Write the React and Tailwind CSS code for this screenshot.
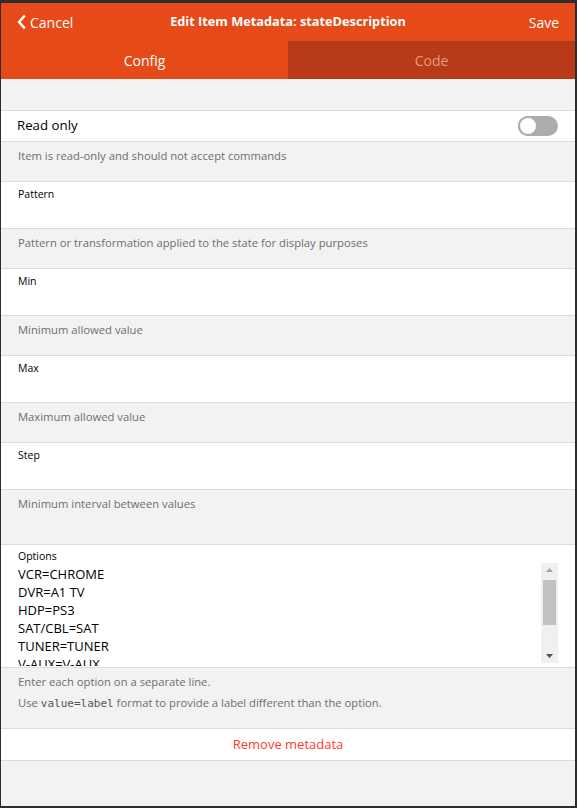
import React from "react";

const font = { fontFamily: '"Open Sans", "Noto Sans", sans-serif' };

function FieldRow({ label, desc, descH = "h-[40px]" }) {
  return (
    <>
      <div className="h-[47px] bg-white border-b border-[#dcdcdc] px-[17px] pt-[5px]">
        <div className="text-[10.5px] text-black leading-[14px]">{label}</div>
      </div>
      <div className={`${descH} border-b border-[#dcdcdc] px-[17px] pt-[6px]`}>
        <div className="text-[11.25px] text-[#6e6e6e] leading-[16px]">{desc}</div>
      </div>
    </>
  );
}

export default function App() {
  return (
    <div className="w-[577px] h-[808px] bg-[#2d2d2d] pt-[3px] pl-[1px] pr-[2px] pb-[2px]" style={font}>
      <div className="h-full bg-[#f2f2f2] flex flex-col overflow-hidden">
        <div className="h-[38px] bg-[#e64a19] flex items-center px-[16px] text-white">
          <div className="flex-1 flex items-center gap-[4px] text-[14px]">
            <svg width="9" height="14" viewBox="0 0 9 14">
              <path d="M7 1.5 L2 7 L7 12.5" fill="none" stroke="white" strokeWidth="2.6" strokeLinecap="round" strokeLinejoin="round" />
            </svg>
            <span>Cancel</span>
          </div>
          <div className="text-[12.75px] font-bold">Edit Item Metadata: stateDescription</div>
          <div className="flex-1 text-right text-[14px]">Save</div>
        </div>
        <div className="h-[38px] flex text-[14px]">
          <div className="w-[287px] bg-[#e64a19] text-white flex items-center justify-center">Config</div>
          <div className="flex-1 bg-[#b93a16] text-[#e29a82] flex items-center justify-center">Code</div>
        </div>
        <div className="h-[32px] border-b border-[#dcdcdc]"></div>
        <div className="h-[31px] bg-white border-b border-[#dcdcdc] flex items-center justify-between pl-[16px] pr-[17px]">
          <span className="text-[13.25px] text-black">Read only</span>
          <div className="w-[40px] h-[20px] rounded-full bg-[#acacac] relative">
            <div className="absolute left-0 top-0 w-[20px] h-[20px] rounded-full bg-white border-[2px] border-[#acacac]"></div>
          </div>
        </div>
        <div className="h-[40px] border-b border-[#dcdcdc] px-[17px] pt-[6px]">
          <div className="text-[11.25px] text-[#6e6e6e] leading-[16px]">Item is read-only and should not accept commands</div>
        </div>
        <FieldRow label="Pattern" desc="Pattern or transformation applied to the state for display purposes" />
        <FieldRow label="Min" desc="Minimum allowed value" />
        <FieldRow label="Max" desc="Maximum allowed value" />
        <FieldRow label="Step" desc="Minimum interval between values" descH="h-[55px]" />
        <div className="h-[123px] bg-white border-b border-[#dcdcdc] pl-[17px] pr-[17px] pt-[4px] flex">
          <div className="flex-1 flex flex-col">
            <div className="text-[10.5px] text-black leading-[14px]">Options</div>
            <div className="h-[101px] overflow-hidden mt-[2px] text-[13px] text-black leading-[18px]">
              <div>VCR=CHROME</div>
              <div>DVR=A1 TV</div>
              <div>HDP=PS3</div>
              <div>SAT/CBL=SAT</div>
              <div>TUNER=TUNER</div>
              <div>V-AUX=V-AUX</div>
            </div>
          </div>
          <div className="w-[17px] h-[100px] mt-[14px] bg-[#f0f0f0] flex flex-col items-center">
            <div className="h-[14px] flex items-center justify-center">
              <svg width="7" height="4" viewBox="0 0 7 4"><path d="M0 4 L3.5 0 L7 4Z" fill="#a3a3a3" /></svg>
            </div>
            <div className="w-[13px] h-[45px] bg-[#c1c1c1] mt-[3px]"></div>
            <div className="flex-1"></div>
            <div className="h-[14px] flex items-center justify-center">
              <svg width="7" height="4" viewBox="0 0 7 4"><path d="M0 0 L3.5 4 L7 0Z" fill="#505050" /></svg>
            </div>
          </div>
        </div>
        <div className="h-[61px] border-b border-[#dcdcdc] px-[17px] pt-[6px] text-[11.25px] text-[#6e6e6e] leading-[16px]">
          <div>Enter each option on a separate line.</div>
          <div className="mt-[5px]">
            Use <span className="text-[#555]" style={{ fontFamily: '"DejaVu Sans Mono", monospace', fontSize: "11px" }}>value=label</span> format to provide a label different than the option.
          </div>
        </div>
        <div className="h-[32px] bg-white border-b border-[#dcdcdc] flex items-center justify-center">
          <span className="text-[13px] text-[#ff3b30]">Remove metadata</span>
        </div>
      </div>
    </div>
  );
}
